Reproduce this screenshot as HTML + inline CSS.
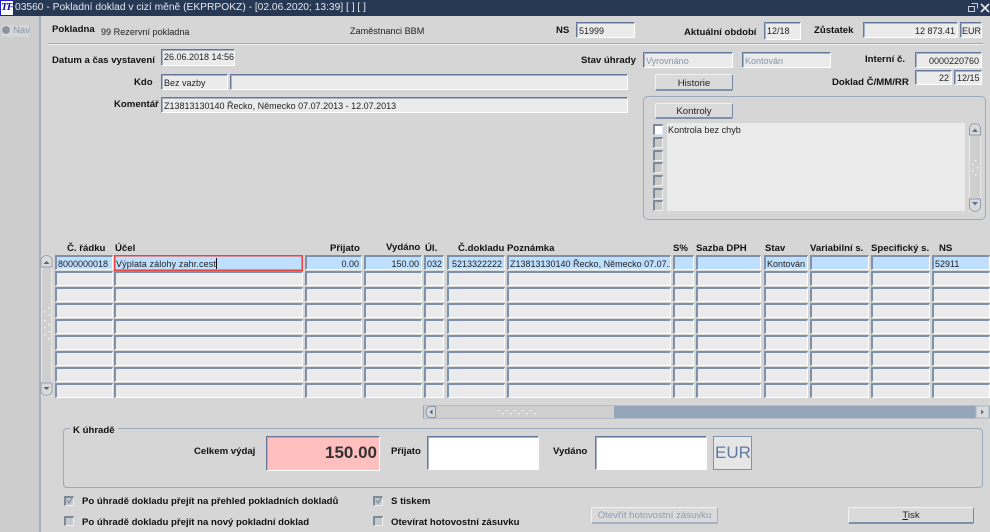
<!DOCTYPE html>
<html><head><meta charset="utf-8">
<style>
html,body{margin:0;padding:0;width:990px;height:532px;overflow:hidden;background:#d6d6d6}
body{position:relative;font:9px "Liberation Sans",sans-serif;color:#111}
div,span{position:absolute;box-sizing:border-box;white-space:nowrap}
.l{font-weight:bold;font-size:9.6px;line-height:12px;color:#111;margin-top:2px}
.t{font-size:9.1px;line-height:12px;color:#222;margin-top:1px}
.f{border:1px solid #fff;border-top:1px solid #64799a;border-left:1px solid #64799a;box-shadow:inset 1px 1px 0 #a8b4c4;background:#ebebeb;font-size:9px;line-height:13px;padding:2px 0 0 2px;color:#222;overflow:hidden}
.row .f{border-top:2px solid #7d91ab;border-left:2px solid #7d91ab;box-shadow:none;padding:1px 0 0 1px}
.f.r,.row .f.r{text-align:right;padding-right:2px;padding-left:0}
.g{color:#8496ad}
.b{border:1px solid #7f92ab;border-top-color:#f1f1f1;border-left-color:#f1f1f1;border-bottom:2px solid #7f92ab;border-right:1px solid #7389a6;background:#dadada;text-align:center;font-size:9.6px;line-height:15px;color:#222;border-radius:2px}
.c{width:10px;height:11px;border:1px solid #f0f0f0;border-top:2px solid #7f8a99;border-left:2px solid #7f8a99;background:#c9c9c9}
.row{left:0;width:990px;height:15px}
.row .blue{background:#bfdfff}
</style></head><body>
<div style="left:0;top:0;width:990px;height:16px;background:#263853"></div>
<div style="left:0;top:0;width:14px;height:16px;background:#fff;border:1px solid #1a1ac8;color:#1212b0;font:italic bold 11px/13px 'Liberation Serif',serif;text-align:center;letter-spacing:-1px">TF</div>
<div style="left:15px;top:1px;color:#e6e9ee;font-size:10.25px;line-height:14px">03560 - Pokladní doklad v cizí měně (EKPRPOKZ) - [02.06.2020; 13:39] [ ] [ ]</div>
<svg style="position:absolute;left:966px;top:1px" width="24" height="14" viewBox="0 0 24 14" fill="none" stroke="#c9d0da" stroke-width="1"><path d="M5.500 2.500h6v5M3 5.500h5.500v5H2.500v-5z"/><path d="M15 3l8 8M23 3l-8 8" stroke-width="1.700" stroke="#e4e7ec"/></svg>

<div style="left:0;top:16px;width:39px;height:516px;background:#cdcdcd"></div>
<div style="left:39px;top:16px;width:2px;height:516px;background:#a5b0bf"></div>
<div style="left:2px;top:25px;width:27px;height:12px;background:#d6d6d6"></div>
<div style="left:2px;top:26px;width:8px;height:8px;border-radius:50%;background:#8a95a3;box-shadow:0 0 0 1px #e0e0e0"></div>
<div class="t" style="left:13px;top:24px;color:#8596ad;font-size:9.600px">Nav</div>

<div class="l" style="left:52px;top:22px">Pokladna</div>
<div class="t" style="left:101px;top:25px">99 Rezervní pokladna</div>
<div class="t" style="left:350px;top:24px">Zaměstnanci BBM</div>
<div class="l" style="left:556px;top:23px">NS</div>
<div class="f" style="left:576px;top:22px;width:59px;height:16px">51999</div>
<div class="l" style="left:684px;top:25px">Aktuální období</div>
<div class="f" style="left:764px;top:22px;width:37px;height:18px">12/18</div>
<div class="l" style="left:814px;top:23px">Zůstatek</div>
<div class="f r" style="left:863px;top:22px;width:95px;height:16px">12 873.41</div>
<div class="f" style="left:960px;top:22px;width:22px;height:16px;padding-left:1px">EUR</div>
<div style="left:48px;top:43px;width:935px;height:1px;background:#a9a9a9"></div>
<div style="left:48px;top:44px;width:935px;height:1px;background:#f0f0f0"></div>

<div class="l" style="left:52px;top:53px">Datum a čas vystavení</div>
<div class="f" style="left:161px;top:49px;width:74px;height:17px;padding-top:1px">26.06.2018 14:56</div>
<div class="l" style="left:134px;top:75px">Kdo</div>
<div class="f" style="left:161px;top:74px;width:67px;height:16px">Bez vazby</div>
<div class="f" style="left:230px;top:74px;width:398px;height:16px"></div>
<div class="l" style="left:114px;top:97px">Komentář</div>
<div class="f" style="left:161px;top:97px;width:467px;height:16px">Z13813130140 Řecko, Německo 07.07.2013 - 12.07.2013</div>

<div class="l" style="left:581px;top:53px">Stav úhrady</div>
<div class="f g" style="left:643px;top:52px;width:90px;height:16px">Vyrovnáno</div>
<div class="f g" style="left:742px;top:52px;width:89px;height:16px">Kontován</div>
<div class="l" style="left:865px;top:52px">Interní č.</div>
<div class="f r" style="left:915px;top:52px;width:67px;height:16px">0000220760</div>
<div class="l" style="left:832px;top:75px">Doklad Č/MM/RR</div>
<div class="f r" style="left:915px;top:70px;width:37px;height:15px;padding-top:1px">22</div>
<div class="f" style="left:954px;top:70px;width:28px;height:15px;padding-top:1px">12/15</div>
<div class="b" style="left:655px;top:74px;width:78px;height:17px;padding-top:1px">Historie</div>

<div style="left:643px;top:96px;width:343px;height:124px;border:1px solid #9aa9bc;border-radius:5px"></div>
<div class="b" style="left:655px;top:103px;width:78px;height:16px">Kontroly</div>
<div style="left:667px;top:123px;width:298px;height:88px;background:#ebebeb"></div>
<div class="t" style="left:668px;top:123px">Kontrola bez chyb</div>
<div class="c" style="left:653px;top:124px;background:#fff;border-right-color:#d8e8fa;border-bottom-color:#d8e8fa"></div>
<div class="c" style="left:653px;top:137px"></div>
<div class="c" style="left:653px;top:150px"></div>
<div class="c" style="left:653px;top:162px"></div>
<div class="c" style="left:653px;top:175px"></div>
<div class="c" style="left:653px;top:188px"></div>
<div class="c" style="left:653px;top:200px"></div>
<svg style="position:absolute;left:968px;top:123px" width="14" height="90" viewBox="0 0 14 90"><rect x="1.500" y="2" width="11" height="86" fill="#cfcfcf" stroke="#e8e8e8"/><path d="M1.500 12V5a5 4 0 0 1 11 0v7z" fill="#d9d9d9" stroke="#8ea0b6"/><path d="M4 9l3-3.500L10 9z" fill="#5d7390"/><path d="M1.500 76v8a5 4 0 0 0 11 0v-8z" fill="#d9d9d9" stroke="#8ea0b6"/><path d="M4 79h6l-3 3.500z" fill="#5d7390"/><g fill="#f4f4f4"><rect x="7" y="37" width="1.500" height="1.500"/><rect x="4" y="41" width="1.500" height="1.500"/><rect x="9" y="44" width="1.500" height="1.500"/><rect x="4" y="47" width="1.500" height="1.500"/><rect x="7" y="51" width="1.500" height="1.500"/></g></svg>

<div class="l" style="left:67px;top:241px">Č. řádku</div>
<div class="l" style="left:115px;top:241px">Účel</div>
<div class="l" style="left:330px;top:241px">Přijato</div>
<div class="l" style="left:386px;top:240px">Vydáno</div>
<div class="l" style="left:425px;top:241px">Úl.</div>
<div class="l" style="left:458px;top:241px">Č.dokladu</div>
<div class="l" style="left:507px;top:241px">Poznámka</div>
<div class="l" style="left:673px;top:241px">S%</div>
<div class="l" style="left:696px;top:241px">Sazba DPH</div>
<div class="l" style="left:765px;top:241px">Stav</div>
<div class="l" style="left:810px;top:241px">Variabilní s.</div>
<div class="l" style="left:871px;top:241px">Specifický s.</div>
<div class="l" style="left:939px;top:241px">NS</div>

<svg style="position:absolute;left:40px;top:254px" width="13" height="144" viewBox="0 0 13 144"><rect x="1.500" y="2" width="10" height="140" fill="#cfcfcf" stroke="#e6e6e6"/><path d="M1 13V6a5.500 4.500 0 0 1 11 0v7z" fill="#dadada" stroke="#93a4b9"/><path d="M3.500 10l3-3 3 3z" fill="#4d6585"/><path d="M1 129v8a5.500 4.500 0 0 0 11 0v-8z" fill="#dadada" stroke="#93a4b9"/><path d="M3.500 133h6l-3 3z" fill="#4d6585"/><g fill="#f4f4f4"><rect x="8" y="53" width="1.500" height="1.500"/><rect x="4" y="57" width="1.500" height="1.500"/><rect x="9" y="60" width="1.500" height="1.500"/><rect x="4" y="66" width="1.500" height="1.500"/><rect x="8" y="70" width="1.500" height="1.500"/><rect x="4" y="73" width="1.500" height="1.500"/><rect x="9" y="77" width="1.500" height="1.500"/><rect x="4" y="80" width="1.500" height="1.500"/><rect x="8" y="84" width="1.500" height="1.500"/></g></svg>

<div class="row" style="top:255px">
<div class="f blue" style="left:55px;width:58px;height:15px">8000000018</div>
<div class="f blue" style="left:114px;top:0;width:189px;height:16px;border:1px solid #e8453f;box-shadow:inset 0 0 0 .5px #e8453f;padding-left:1px;line-height:14px;letter-spacing:.12px">Výplata zálohy zahr.cest<span style="position:static;display:inline-block;width:1px;height:11px;background:#111;vertical-align:-2px"></span></div>
<div class="f blue r" style="left:305px;width:57px;height:15px">0.00</div>
<div class="f blue r" style="left:364px;width:58px;height:15px">150.00</div>
<div class="f blue" style="left:424px;width:20px;height:15px">032</div>
<div class="f blue r" style="left:447px;width:58px;height:15px">5213322222</div>
<div class="f blue" style="left:507px;width:164px;height:15px">Z13813130140 Řecko, Německo 07.07.2013 - 12.07.2013</div>
<div class="f blue" style="left:673px;width:21px;height:15px"></div>
<div class="f blue" style="left:696px;width:65px;height:15px"></div>
<div class="f blue" style="left:764px;width:44px;height:15px">Kontován</div>
<div class="f blue" style="left:810px;width:59px;height:15px"></div>
<div class="f blue" style="left:871px;width:59px;height:15px"></div>
<div class="f blue" style="left:932px;width:58px;height:15px">52911</div>
</div>

<div class="row" style="top:271px"><div class="f" style="left:55px;width:58px;height:15px"></div><div class="f" style="left:114px;width:189px;height:15px"></div><div class="f" style="left:305px;width:57px;height:15px"></div><div class="f" style="left:364px;width:58px;height:15px"></div><div class="f" style="left:424px;width:20px;height:15px"></div><div class="f" style="left:447px;width:58px;height:15px"></div><div class="f" style="left:507px;width:164px;height:15px"></div><div class="f" style="left:673px;width:21px;height:15px"></div><div class="f" style="left:696px;width:65px;height:15px"></div><div class="f" style="left:764px;width:44px;height:15px"></div><div class="f" style="left:810px;width:59px;height:15px"></div><div class="f" style="left:871px;width:59px;height:15px"></div><div class="f" style="left:932px;width:58px;height:15px"></div></div>
<div class="row" style="top:287px"><div class="f" style="left:55px;width:58px;height:15px"></div><div class="f" style="left:114px;width:189px;height:15px"></div><div class="f" style="left:305px;width:57px;height:15px"></div><div class="f" style="left:364px;width:58px;height:15px"></div><div class="f" style="left:424px;width:20px;height:15px"></div><div class="f" style="left:447px;width:58px;height:15px"></div><div class="f" style="left:507px;width:164px;height:15px"></div><div class="f" style="left:673px;width:21px;height:15px"></div><div class="f" style="left:696px;width:65px;height:15px"></div><div class="f" style="left:764px;width:44px;height:15px"></div><div class="f" style="left:810px;width:59px;height:15px"></div><div class="f" style="left:871px;width:59px;height:15px"></div><div class="f" style="left:932px;width:58px;height:15px"></div></div>
<div class="row" style="top:303px"><div class="f" style="left:55px;width:58px;height:15px"></div><div class="f" style="left:114px;width:189px;height:15px"></div><div class="f" style="left:305px;width:57px;height:15px"></div><div class="f" style="left:364px;width:58px;height:15px"></div><div class="f" style="left:424px;width:20px;height:15px"></div><div class="f" style="left:447px;width:58px;height:15px"></div><div class="f" style="left:507px;width:164px;height:15px"></div><div class="f" style="left:673px;width:21px;height:15px"></div><div class="f" style="left:696px;width:65px;height:15px"></div><div class="f" style="left:764px;width:44px;height:15px"></div><div class="f" style="left:810px;width:59px;height:15px"></div><div class="f" style="left:871px;width:59px;height:15px"></div><div class="f" style="left:932px;width:58px;height:15px"></div></div>
<div class="row" style="top:319px"><div class="f" style="left:55px;width:58px;height:15px"></div><div class="f" style="left:114px;width:189px;height:15px"></div><div class="f" style="left:305px;width:57px;height:15px"></div><div class="f" style="left:364px;width:58px;height:15px"></div><div class="f" style="left:424px;width:20px;height:15px"></div><div class="f" style="left:447px;width:58px;height:15px"></div><div class="f" style="left:507px;width:164px;height:15px"></div><div class="f" style="left:673px;width:21px;height:15px"></div><div class="f" style="left:696px;width:65px;height:15px"></div><div class="f" style="left:764px;width:44px;height:15px"></div><div class="f" style="left:810px;width:59px;height:15px"></div><div class="f" style="left:871px;width:59px;height:15px"></div><div class="f" style="left:932px;width:58px;height:15px"></div></div>
<div class="row" style="top:335px"><div class="f" style="left:55px;width:58px;height:15px"></div><div class="f" style="left:114px;width:189px;height:15px"></div><div class="f" style="left:305px;width:57px;height:15px"></div><div class="f" style="left:364px;width:58px;height:15px"></div><div class="f" style="left:424px;width:20px;height:15px"></div><div class="f" style="left:447px;width:58px;height:15px"></div><div class="f" style="left:507px;width:164px;height:15px"></div><div class="f" style="left:673px;width:21px;height:15px"></div><div class="f" style="left:696px;width:65px;height:15px"></div><div class="f" style="left:764px;width:44px;height:15px"></div><div class="f" style="left:810px;width:59px;height:15px"></div><div class="f" style="left:871px;width:59px;height:15px"></div><div class="f" style="left:932px;width:58px;height:15px"></div></div>
<div class="row" style="top:351px"><div class="f" style="left:55px;width:58px;height:15px"></div><div class="f" style="left:114px;width:189px;height:15px"></div><div class="f" style="left:305px;width:57px;height:15px"></div><div class="f" style="left:364px;width:58px;height:15px"></div><div class="f" style="left:424px;width:20px;height:15px"></div><div class="f" style="left:447px;width:58px;height:15px"></div><div class="f" style="left:507px;width:164px;height:15px"></div><div class="f" style="left:673px;width:21px;height:15px"></div><div class="f" style="left:696px;width:65px;height:15px"></div><div class="f" style="left:764px;width:44px;height:15px"></div><div class="f" style="left:810px;width:59px;height:15px"></div><div class="f" style="left:871px;width:59px;height:15px"></div><div class="f" style="left:932px;width:58px;height:15px"></div></div>
<div class="row" style="top:367px"><div class="f" style="left:55px;width:58px;height:15px"></div><div class="f" style="left:114px;width:189px;height:15px"></div><div class="f" style="left:305px;width:57px;height:15px"></div><div class="f" style="left:364px;width:58px;height:15px"></div><div class="f" style="left:424px;width:20px;height:15px"></div><div class="f" style="left:447px;width:58px;height:15px"></div><div class="f" style="left:507px;width:164px;height:15px"></div><div class="f" style="left:673px;width:21px;height:15px"></div><div class="f" style="left:696px;width:65px;height:15px"></div><div class="f" style="left:764px;width:44px;height:15px"></div><div class="f" style="left:810px;width:59px;height:15px"></div><div class="f" style="left:871px;width:59px;height:15px"></div><div class="f" style="left:932px;width:58px;height:15px"></div></div>
<div class="row" style="top:383px"><div class="f" style="left:55px;width:58px;height:15px"></div><div class="f" style="left:114px;width:189px;height:15px"></div><div class="f" style="left:305px;width:57px;height:15px"></div><div class="f" style="left:364px;width:58px;height:15px"></div><div class="f" style="left:424px;width:20px;height:15px"></div><div class="f" style="left:447px;width:58px;height:15px"></div><div class="f" style="left:507px;width:164px;height:15px"></div><div class="f" style="left:673px;width:21px;height:15px"></div><div class="f" style="left:696px;width:65px;height:15px"></div><div class="f" style="left:764px;width:44px;height:15px"></div><div class="f" style="left:810px;width:59px;height:15px"></div><div class="f" style="left:871px;width:59px;height:15px"></div><div class="f" style="left:932px;width:58px;height:15px"></div></div>

<svg style="position:absolute;left:423px;top:405px" width="567" height="14" viewBox="0 0 567 14"><rect width="567" height="13" y="0.500" fill="#95a5b9"/><rect x="1" y="1" width="190" height="12" fill="#cfcfcf"/><path d="M12.500 1.500H7a4 5.500 0 0 0-4 5.500 4 5.500 0 0 0 4 5.500h5.500z" fill="#dadada" stroke="#8396ae"/><path d="M9.500 4.500v5l-3-2.500z" fill="#4d6585"/><rect x="553" y="1" width="13" height="12" fill="#dadada" stroke="#a9b6c7"/><path d="M558 4.500v5l3-2.500z" fill="#5d7390"/><g fill="#f4f4f4"><rect x="75" y="5" width="1.500" height="1.500"/><rect x="79" y="8" width="1.500" height="1.500"/><rect x="83" y="5" width="1.500" height="1.500"/><rect x="87" y="8" width="1.500" height="1.500"/><rect x="91" y="5" width="1.500" height="1.500"/><rect x="95" y="8" width="1.500" height="1.500"/><rect x="99" y="5" width="1.500" height="1.500"/><rect x="103" y="8" width="1.500" height="1.500"/><rect x="107" y="5" width="1.500" height="1.500"/><rect x="111" y="8" width="1.500" height="1.500"/></g></svg>

<div style="left:63px;top:428px;width:920px;height:60px;border:1px solid #9aa9bc;border-radius:4px"></div>
<div class="l" style="left:70px;top:423px;background:#d6d6d6;padding:0 3px">K úhradě</div>
<div class="l" style="left:194px;top:444px">Celkem výdaj</div>
<div class="f r" style="left:266px;top:436px;width:114px;height:35px;background:#ffbfbf;font-size:17px;font-weight:bold;line-height:32px;color:#333;padding-top:0">150.00</div>
<div class="l" style="left:391px;top:444px">Přijato</div>
<div class="f" style="left:427px;top:436px;width:112px;height:34px;background:#fff"></div>
<div class="l" style="left:553px;top:444px">Vydáno</div>
<div class="f" style="left:595px;top:436px;width:112px;height:34px;background:#fff"></div>
<div class="f" style="left:713px;top:436px;width:39px;height:34px;border:1px solid #7f94b0;box-shadow:none;background:#e6e6e6;color:#6079a0;font-size:17px;line-height:32px;padding:0 0 0 1px">EUR</div>

<div class="c" style="left:64px;top:496px;height:10px;background:#c9c9c9"></div>
<svg style="position:absolute;left:64px;top:495px" width="11" height="11" viewBox="0 0 11 11"><path d="M3 5l2 3 4-6" fill="none" stroke="#8797ab" stroke-width="1.500"/></svg>
<div class="l" style="left:82px;top:494px">Po úhradě dokladu přejít na přehled pokladních dokladů</div>
<div class="c" style="left:64px;top:516px;height:10px"></div>
<div class="l" style="left:82px;top:515px">Po úhradě dokladu přejít na nový pokladní doklad</div>
<div class="c" style="left:373px;top:496px;height:10px"></div>
<svg style="position:absolute;left:373px;top:495px" width="11" height="11" viewBox="0 0 11 11"><path d="M3 5l2 3 4-6" fill="none" stroke="#8797ab" stroke-width="1.500"/></svg>
<div class="l" style="left:391px;top:494px">S tiskem</div>
<div class="c" style="left:373px;top:516px;height:10px"></div>
<div class="l" style="left:391px;top:515px">Otevírat hotovostní zásuvku</div>
<div class="b" style="left:591px;top:507px;width:127px;height:17px;color:#8d9cb0;border-color:#f1f1f1 #a4b1c2 #a4b1c2 #f1f1f1">Otevřít hotovostní zásuvku</div>
<div class="b" style="left:848px;top:507px;width:126px;height:17px"><span style="position:static;text-decoration:underline">T</span>isk</div>
</body></html>
